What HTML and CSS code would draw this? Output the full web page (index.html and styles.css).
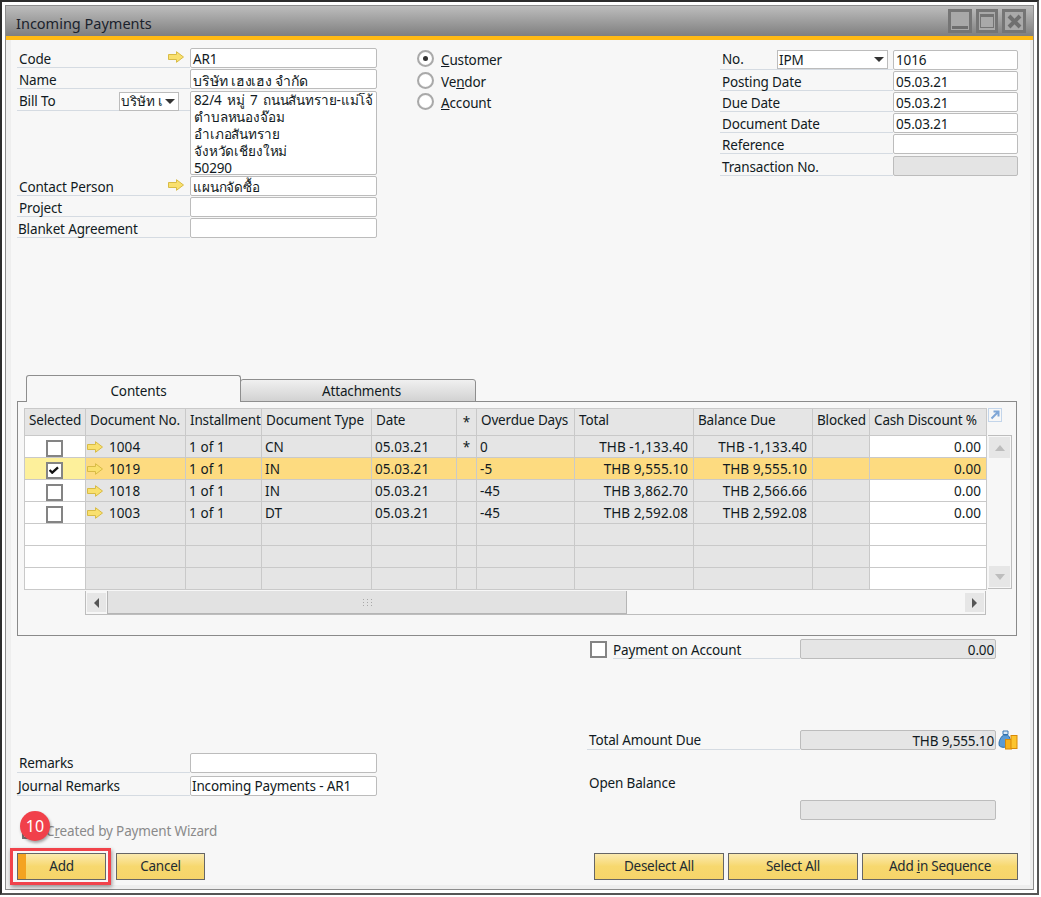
FILE: index.html
```html
<!DOCTYPE html>
<html lang="en">
<head>
<meta charset="utf-8">
<title>Incoming Payments</title>
<link rel="stylesheet" href="styles.css">
</head>
<body>
<svg class="defs" width="0" height="0" aria-hidden="true">
  <symbol id="arrow" viewBox="0 0 16 12"><path d="M.5 3.500H8.500V.7L15.500 6 8.500 11.300V8.500H.5Z" fill="#f9e06e" stroke="#d8bb45"/></symbol>
</svg>
<div class="frame">
<div class="window">
  <header class="titlebar">
    <span class="title">Incoming Payments</span>
    <div class="winbtns">
      <span class="winbtn"><i class="min-line"></i></span>
      <span class="winbtn winbtn-max"><i class="max-box"></i></span>
      <span class="winbtn">
        <svg viewBox="0 0 17 17" width="17" height="17"><path d="M3 3 14 14M14 3 3 14" stroke="#6f6f6f" stroke-width="4"/></svg>
      </span>
    </div>
  </header>
  <div class="accent"></div>
  <main class="content">
    <section class="head">
      <div class="col-left">
        <div class="row"><label class="lab">Code<svg class="lab-arrow"><use href="#arrow"/></svg></label><div class="fld fld-left">AR1</div></div>
        <div class="row"><label class="lab">Name</label><div class="fld fld-left fld-name">บริษัท เฮงเฮง จำกัด</div></div>
        <div class="row row-addr">
          <label class="lab lab-bill">Bill To<span class="mini-select"><span class="mini-text">บริษัท เ</span><b class="caret"></b></span></label>
          <div class="fld fld-addr">82/4 หมู่ 7 ถนนสันทราย-แม่โจ้<br>ตำบลหนองจ๊อม<br>อำเภอสันทราย<br>จังหวัดเชียงใหม่<br>50290</div>
        </div>
        <div class="row"><label class="lab">Contact Person<svg class="lab-arrow"><use href="#arrow"/></svg></label><div class="fld">แผนกจัดซื้อ</div></div>
        <div class="row"><label class="lab">Project</label><div class="fld"></div></div>
        <div class="row"><label class="lab lab-tight">Blanket Agreement</label><div class="fld"></div></div>
      </div>
      <div class="col-radio">
        <div class="radio-row"><span class="radio radio-on"></span><span class="radio-text"><u>C</u>ustomer</span></div>
        <div class="radio-row"><span class="radio"></span><span class="radio-text">Ve<u>n</u>dor</span></div>
        <div class="radio-row"><span class="radio"></span><span class="radio-text"><u>A</u>ccount</span></div>
      </div>
      <div class="col-right">
        <div class="row row-r"><label class="lab lab-r lab-no">No.<span class="series">IPM<b class="caret"></b></span></label><div class="fld fld-r fld-no">1016</div></div>
        <div class="row row-r"><label class="lab lab-r">Posting Date</label><div class="fld fld-r">05.03.21</div></div>
        <div class="row row-r"><label class="lab lab-r">Due Date</label><div class="fld fld-r">05.03.21</div></div>
        <div class="row row-r"><label class="lab lab-r">Document Date</label><div class="fld fld-r">05.03.21</div></div>
        <div class="row row-r"><label class="lab lab-r">Reference</label><div class="fld fld-r"></div></div>
        <div class="row row-r row-last"><label class="lab lab-r">Transaction No.</label><div class="fld fld-r fld-off"></div></div>
      </div>
    </section>

    <nav class="tabs">
      <span class="tab tab-on">Contents</span>
      <span class="tab tab-off">Attachments</span>
    </nav>
    <section class="panel">
      <div class="grid-wrap">
        <table class="grid">
          <colgroup>
            <col class="c1"><col class="c2"><col class="c3"><col class="c4"><col class="c5"><col class="c6"><col class="c7"><col class="c8"><col class="c9"><col class="c10"><col class="c11">
          </colgroup>
          <thead>
            <tr><th>Selected</th><th>Document No.</th><th>Installment</th><th>Document Type</th><th>Date</th><th class="ctr star-h">*</th><th>Overdue Days</th><th>Total</th><th>Balance Due</th><th>Blocked</th><th>Cash Discount %</th></tr>
          </thead>
          <tbody>
            <tr><td class="sel"><span class="box"></span></td><td><svg class="doc-arrow"><use href="#arrow"/></svg>1004</td><td>1 of 1</td><td>CN</td><td>05.03.21</td><td class="ctr">*</td><td>0</td><td class="num">THB -1,133.40</td><td class="num">THB -1,133.40</td><td></td><td class="num edit">0.00</td></tr>
            <tr class="hl"><td class="sel"><span class="box"><svg viewBox="0 0 11 9" width="10" height="8"><path d="M.5 4.500 3.500 7.500 10 1.500" fill="none" stroke="#111" stroke-width="2.600"/></svg></span></td><td><svg class="doc-arrow"><use href="#arrow"/></svg>1019</td><td>1 of 1</td><td>IN</td><td>05.03.21</td><td></td><td>-5</td><td class="num">THB 9,555.10</td><td class="num">THB 9,555.10</td><td></td><td class="num edit">0.00</td></tr>
            <tr><td class="sel"><span class="box"></span></td><td><svg class="doc-arrow"><use href="#arrow"/></svg>1018</td><td>1 of 1</td><td>IN</td><td>05.03.21</td><td></td><td>-45</td><td class="num">THB 3,862.70</td><td class="num">THB 2,566.66</td><td></td><td class="num edit">0.00</td></tr>
            <tr><td class="sel"><span class="box"></span></td><td><svg class="doc-arrow"><use href="#arrow"/></svg>1003</td><td>1 of 1</td><td>DT</td><td>05.03.21</td><td></td><td>-45</td><td class="num">THB 2,592.08</td><td class="num">THB 2,592.08</td><td></td><td class="num edit">0.00</td></tr>
            <tr><td class="sel"></td><td></td><td></td><td></td><td></td><td></td><td></td><td></td><td></td><td></td><td class="edit"></td></tr>
            <tr><td class="sel"></td><td></td><td></td><td></td><td></td><td></td><td></td><td></td><td></td><td></td><td class="edit"></td></tr>
            <tr><td class="sel"></td><td></td><td></td><td></td><td></td><td></td><td></td><td></td><td></td><td></td><td class="edit"></td></tr>
          </tbody>
        </table>
        <div class="vside">
          <svg class="expand" viewBox="0 0 14 14" width="14" height="14"><rect x=".5" y=".5" width="13" height="13" fill="none" stroke="#c3d5ea"/><path d="M3.500 10.500 10 4M5.500 3.500H10.500V8.500" fill="none" stroke="#7fa6d6" stroke-width="2"/></svg>
          <div class="vscroll">
            <span class="sbtn"><b class="tri tri-up"></b></span>
            <span class="sbtn"><b class="tri tri-down"></b></span>
          </div>
        </div>
      </div>
      <div class="hscroll">
        <span class="hbtn"><b class="tri-left"></b></span>
        <span class="thumb">
          <svg viewBox="0 0 9 7" width="9" height="7"><path d="M0 .5H1M4 .5H5M8 .5H9M0 3.500H1M4 3.500H5M8 3.500H9M0 6.500H1M4 6.500H5M8 6.500H9" stroke="#a8a8a8"/></svg>
        </span>
        <span class="hbtn hbtn-r"><b class="tri-right"></b></span>
      </div>
    </section>

    <section class="lower">
      <div class="lower-left">
        <div class="row"><label class="lab">Remarks</label><div class="fld"></div></div>
        <div class="row row-journal"><label class="lab lab-tight">Journal Remarks</label><div class="fld fld-tight">Incoming Payments - AR1</div></div>
        <div class="wizard"><span class="box box-off"></span><span>C<u>r</u>eated by Payment Wizard</span></div>
      </div>
      <div class="lower-right">
        <div class="sum-row sum-pay">
          <span class="box box-pay"></span>
          <span class="sum-lab sum-lab-pay">Payment on Account</span>
          <div class="sum-fld">0.00</div>
        </div>
        <div class="sum-row sum-total">
          <span class="sum-lab sum-lab-line">Total Amount Due</span>
          <div class="sum-fld">THB 9,555.10</div>
          <svg class="coins" viewBox="0 0 20 20" width="20" height="20">
            <path d="M5 1h5v3.500H5Z" fill="#dbe9f6" stroke="#3b79b4"/>
            <path d="M5.500 5h4c3 1.500 3.500 8 2 11-2 1.500-8 2-10 0-1.500-3 .5-8.500 4-11Z" fill="#5b9bd5" stroke="#2f6ea8"/>
            <rect x="7.500" y="9.500" width="6" height="9.500" fill="#f7b21c" stroke="#d98a06"/>
            <rect x="13" y="5.500" width="6" height="13" fill="#fcc42e" stroke="#d98a06"/>
          </svg>
        </div>
        <div class="open-lab">Open Balance</div>
        <div class="sum-row sum-open"><span class="sum-lab"></span><div class="sum-fld"></div></div>
      </div>
    </section>

    <footer class="actions">
      <div class="btn-group">
        <button class="btn btn-add" type="button">Add</button>
        <button class="btn btn-cancel" type="button">Cancel</button>
      </div>
      <div class="btn-group btn-group-r">
        <button class="btn btn-130" type="button">Deselect All</button>
        <button class="btn btn-130" type="button">Select All</button>
        <button class="btn btn-156" type="button">Add <u>i</u>n Sequence</button>
      </div>
    </footer>
  </main>
</div>
</div>
<div class="highlight"></div>
<div class="badge">10</div>
</body>
</html>
```
FILE: styles.css
```css
* { box-sizing: border-box; }
html, body { margin: 0; padding: 0; }
body {
  width: 1041px;
  height: 897px;
  overflow: hidden;
  position: relative;
  background: #fff;
  font: 13.5px/20px "Noto Sans", "Open Sans", sans-serif;
  letter-spacing: -0.15px;
  color: #111a22;
}
.defs { position: absolute; }
.frame {
  width: 1039px;
  height: 895px;
  border-top: 2px solid #2c2c2c;
  border-left: 2px solid #2c2c2c;
  border-right: 2px solid #555;
  border-bottom: 2px solid #555;
  padding: 3px;
  background: #fff;
}
.window {
  width: 1029px;
  height: 885px;
  border: 1px solid #8c8c8c;
  background: #eeeeee;
}
.titlebar {
  height: 30px;
  background: linear-gradient(#bdbdbd, #7f7f7f);
  display: flex;
  align-items: center;
  justify-content: space-between;
  padding: 0 7px 0 10px;
}
.title { color: #1a222c; font-size: 14.5px; letter-spacing: 0; padding-top: 3px; }
.winbtns { display: flex; gap: 4px; }
.winbtn {
  width: 24px;
  height: 24px;
  border: 3px solid #757575;
  background: #a9a9a9;
  display: flex;
  align-items: center;
  justify-content: center;
}
.winbtn-max { width: 22px; }
.min-line { width: 16px; height: 3px; background: #6f6f6f; margin-top: 12px; }
.max-box { width: 14px; height: 14px; border: 1px solid #747474; border-top-width: 3px; }
.accent { height: 4px; background: #ffba14; }
.content { margin: 0 3px 0 5px; height: 845px; padding: 0 12px 0 6px; background: #f7f7f7; }

.head { display: flex; height: 336px; padding-top: 8px; }
.col-left { width: 360px; }
.col-radio { width: 303px; margin-left: 40px; }
.col-right { width: 298px; padding-top: 2px; }
.row { display: flex; align-items: flex-start; height: 21px; }
.lab {
  width: 173px;
  height: 20px;
  line-height: 21px;
  padding: 4px 0 0 2px;
  border-bottom: 1px solid #d5dbe2;
  display: flex;
  align-items: center;
  position: relative;
}
.lab-tight { padding-left: 1px; }
.lab-bill { padding-top: 2px; }
.lab-no { padding-top: 0; }
.lab-arrow { width: 16px; height: 12px; margin-left: auto; margin-right: 6px; margin-top: -5px; }
.fld {
  width: 187px;
  height: 20px;
  line-height: 20px;
  background: #fff;
  border: 1px solid #bcbcbc;
  border-radius: 2px;
  padding-left: 2px;
  white-space: nowrap;
  overflow: hidden;
}
.fld-left { line-height: 21px; }
.fld-name { font-size: 14px; }
.row-addr { height: 85px; margin-top: 1px; }
.fld-addr { height: 84px; line-height: 17px; padding-left: 3px; overflow: visible; word-spacing: 2px; }
.fld-tight { padding-left: 1px; line-height: 18px; }
.fld-no { line-height: 18px; }
.mini-select {
  margin-left: auto;
  margin-right: 11px;
  margin-top: -1px;
  width: 60px;
  height: 19px;
  background: #fff;
  border: 1px solid #bcbcbc;
  display: flex;
  align-items: center;
  position: relative;
  padding-left: 1px;
}
.mini-text { white-space: nowrap; }
.caret {
  width: 0;
  height: 0;
  border-left: 5px solid transparent;
  border-right: 5px solid transparent;
  border-top: 5px solid #333;
  position: absolute;
  right: 3px;
  top: 6px;
}

.radio-row { display: flex; align-items: center; height: 21.5px; gap: 7px; }
.radio {
  width: 17px;
  height: 17px;
  border-radius: 50%;
  border: 2px solid #a9a9a9;
  background: radial-gradient(#fff 55%, #e6e6e6);
  display: flex;
  align-items: center;
  justify-content: center;
}
.radio-on::after { content: ""; width: 5px; height: 5px; border-radius: 50%; background: #333; }
.radio-text { padding-top: 3px; }

.row-r { width: 298px; }
.lab-r { width: 173px; }
.fld-r { width: 125px; padding-left: 2px; }
.fld-off { background: #e4e4e4; }
.row-last { margin-top: 1px; }
.series {
  position: absolute;
  left: 57px;
  top: 0;
  width: 111px;
  height: 19px;
  background: #fff;
  border: 1px solid #bcbcbc;
  padding-left: 1px;
  line-height: 19px;
}

.tabs { display: flex; padding-left: 9px; height: 26px; align-items: flex-end; position: relative; z-index: 1; margin-bottom: -1px; }
.tab {
  display: flex;
  align-items: center;
  justify-content: center;
  border: 1px solid #8e8e8e;
  border-bottom: 0;
  border-radius: 3px 3px 0 0;
}
.tab-on { width: 215px; height: 27px; background: #f7f7f7; padding: 4px 0 0 10px; }
.tab-off { width: 236px; height: 23px; margin-left: -1px; padding-left: 7px; background: linear-gradient(#f0f0f0, #d2d2d2); border-bottom: 1px solid #8e8e8e; }

.panel {
  width: 1000px;
  height: 235px;
  border: 1px solid #8a8a8a;
  padding: 6px 0 0 6px;
}
.grid-wrap { display: flex; align-items: flex-start; }
.grid {
  table-layout: fixed;
  border-collapse: collapse;
  width: 962px;
}
.c1 { width: 61px; } .c2 { width: 100px; } .c3 { width: 76px; } .c4 { width: 110px; }
.c5 { width: 85px; } .c6 { width: 20px; } .c7 { width: 98px; } .c8 { width: 119px; }
.c9 { width: 119px; } .c10 { width: 57px; } .c11 { width: 117px; }
.grid th, .grid td {
  border: 1px solid #c9c9c9;
  background: #e5e5e5;
  font-weight: 400;
  text-align: left;
  white-space: nowrap;
  overflow: hidden;
}
.grid th { height: 27px; padding: 0 4px 4px; }
.grid td { height: 22px; padding: 1px 3px 0; letter-spacing: .08px; }
.grid .ctr { text-align: center; padding: 0; }
.grid .num { text-align: right; padding-right: 5px; }
.grid .sel, .grid .edit { background: #fff; }
.grid .sel { text-align: center; padding: 1px 2px 0 0; vertical-align: middle; }
.grid .hl td { background: #fddb80; }
.grid .hl .sel { background: #fdf09b; }
.doc-arrow { width: 16px; height: 12px; margin: 0 6px 0 -2px; vertical-align: -1px; }
.box {
  display: inline-flex;
  width: 17px;
  height: 17px;
  border: 2.500px solid #848484;
  background: #fff;
  vertical-align: middle;
  align-items: center;
  justify-content: center;
}
.vside { width: 24px; margin-left: 1px; display: flex; flex-direction: column; }
.expand { display: block; margin-bottom: 13px; }
.vscroll {
  height: 154px;
  border: 1px solid #bdbdbd;
  border-left: 0;
  display: flex;
  flex-direction: column;
  justify-content: space-between;
  padding: 1px;
}
.sbtn { height: 21px; background: #e6e6e6; display: flex; align-items: center; justify-content: center; }
.tri { width: 0; height: 0; border-left: 5px solid transparent; border-right: 5px solid transparent; }
.tri-up { border-bottom: 6px solid #bdbdbd; }
.tri-down { border-top: 6px solid #bdbdbd; }
.hscroll {
  margin-left: 61px;
  margin-top: 1px;
  width: 901px;
  height: 24px;
  border: 1px solid #bdbdbd;
  border-top: 0;
  display: flex;
  align-items: stretch;
}
.hbtn {
  width: 19px;
  margin: 2px 1px;
  background: #e6e6e6;
  display: flex;
  align-items: center;
  justify-content: center;
}
.hbtn-r { margin-left: auto; }
.tri-left { width: 0; height: 0; border-top: 5px solid transparent; border-bottom: 5px solid transparent; border-right: 5px solid #555; }
.tri-right { width: 0; height: 0; border-top: 5px solid transparent; border-bottom: 5px solid transparent; border-left: 5px solid #555; }
.thumb {
  width: 520px;
  background: #e2e2e2;
  border: 1px solid #b5b5b5;
  border-top: 0;
  display: flex;
  align-items: center;
  justify-content: center;
}

.lower { display: flex; height: 217px; }
.lower-left { width: 360px; padding-top: 117px; }
.lower-left .lab { padding-top: 2px; }
.row-journal { margin-top: 2px; }
.wizard { display: flex; align-items: center; gap: 8px; margin-top: 24px; padding-left: 5px; color: #8a8a8a; }
.box-off { width: 16px; height: 16px; border-color: #777; }
.lower-right { width: 431px; margin-left: 210px; padding-top: 3px; }
.sum-row { display: flex; align-items: flex-start; height: 20px; }
.box-pay { width: 17px; height: 17px; margin: 2px 6px 0 3px; flex: none; }
.sum-lab { width: 213px; height: 20px; line-height: 21px; padding-left: 2px; flex: none; }
.sum-lab-pay { width: 187px; padding-left: 0; line-height: 22px; border-bottom: 1px solid #d5dbe2; }
.sum-lab-line { border-bottom: 1px solid #d5dbe2; }
.sum-fld {
  width: 196px;
  height: 20px;
  line-height: 20px;
  border: 1px solid #bcbcbc;
  border-radius: 2px;
  background: #e5e5e5;
  text-align: right;
  padding-right: 1px;
  flex: none;
}
.sum-total { margin-top: 71px; }
.coins { flex: none; margin-left: 2px; }
.open-lab { margin-top: 23px; padding-left: 2px; height: 20px; }
.sum-open { margin-top: 7px; }

.actions { display: flex; justify-content: space-between; }
.btn-group { display: flex; gap: 10px; }
.btn-group-r { gap: 4px; }
.btn {
  height: 27px;
  border: 1px solid #666;
  background: linear-gradient(#fbeab0 0%, #f7d86e 50%, #f6d56a 100%);
  font: inherit;
  letter-spacing: -0.25px;
  color: #222b33;
  padding: 0 0 2px;
}
.btn-add { width: 89px; background: linear-gradient(90deg, #f4a321 8px, transparent 8px), linear-gradient(#fbeab0 0%, #f7d86e 50%, #f6d56a 100%); }
.btn-cancel { width: 89px; }
.btn-130 { width: 130px; }
.btn-156 { width: 156px; }

.highlight {
  position: absolute;
  left: 10px;
  top: 848px;
  width: 101px;
  height: 37px;
  border: 3px solid #f1434b;
  box-shadow: 1px 2px 4px rgba(0,0,0,.4);
}
.badge {
  position: absolute;
  left: 20px;
  top: 811px;
  width: 30px;
  height: 30px;
  border-radius: 50%;
  background: #f1404a;
  color: #fff;
  font-size: 16px;
  line-height: 30px;
  letter-spacing: 0;
  text-align: center;
  box-shadow: 1px 2px 3px rgba(0,0,0,.35);
}
```
